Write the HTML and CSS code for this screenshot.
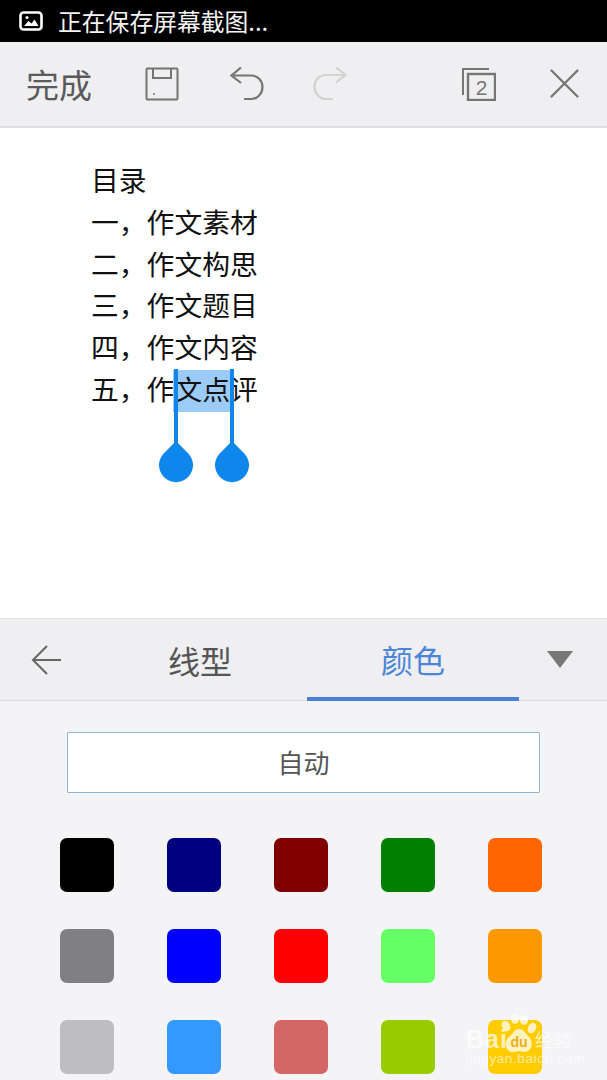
FILE: index.html
```html
<!DOCTYPE html>
<html lang="zh">
<head>
<meta charset="utf-8">
<title>编辑</title>
<link rel="stylesheet" href="styles.css">
</head>
<body>
<div class="screen">
  <header class="status">
    <svg class="status-icon" width="24" height="20" viewBox="0 0 24 20"><rect x="1.500" y="1.500" width="21" height="17" rx="3" fill="none" stroke="#fff" stroke-width="2.600"/><path d="M5 15l4.500-5 3 2.500 3-4 4 6.500z" fill="#fff"/><circle cx="8" cy="6.500" r="1.500" fill="#fff"/></svg>
    <span class="status-text">正在保存屏幕截图...</span>
  </header>

  <nav class="toolbar">
    <span class="done">完成</span>
    <svg class="ico save" width="34" height="34" viewBox="0 0 34 34" fill="none" stroke="#757575" stroke-width="2"><rect x="1.500" y="1.500" width="31" height="31" rx="1"/><path d="M8 2v9h18V2"/><circle cx="9" cy="27" r="1" fill="#757575" stroke="none"/></svg>
    <svg class="ico undo" width="34" height="34" viewBox="0 0 34 34" fill="none" stroke="#757575" stroke-width="2.200"><path d="M11 0.500L1.500 8.500l9.500 7.500M2 8.500h19c6.500 0 11.500 5 11.500 11.500S27.500 32 21 32h-7"/></svg>
    <svg class="ico redo" width="34" height="34" viewBox="0 0 34 34" fill="none" stroke="#d2d2d2" stroke-width="2.200"><path d="M23 0.500l9.500 7.500-9.500 7.500M32 8H13C6.500 8 1.500 13 1.500 19.500S6.500 32 13 32h7"/></svg>
    <svg class="ico copies" width="35" height="34" viewBox="0 0 35 34" fill="none" stroke="#757575" stroke-width="2"><path d="M28 2H2v26"/><rect x="7" y="7" width="27" height="26" stroke-width="2.400"/><text x="20.500" y="27.500" class="copies-num">2</text></svg>
    <svg class="ico close" width="29" height="29" viewBox="0 0 29 29" fill="none" stroke="#757575" stroke-width="2.300" stroke-linecap="round"><path d="M1.500 1.500l26 26M27.500 1.500l-26 26"/></svg>
  </nav>

  <main class="doc">
    <p class="line">目录</p>
    <p class="line">一，作文素材</p>
    <p class="line">二，作文构思</p>
    <p class="line">三，作文题目</p>
    <p class="line">四，作文内容</p>
    <p class="line">五，作<span class="sel">文点</span>评</p>
    <svg class="handle handle-a" width="34" height="114" viewBox="0 0 34 114"><path d="M15 0h4v74l8.800 9A17 17 0 1 1 6.200 83L15 74z" fill="#0f86ec"/></svg>
    <svg class="handle handle-b" width="34" height="114" viewBox="0 0 34 114"><path d="M15 0h4v74l8.800 9A17 17 0 1 1 6.200 83L15 74z" fill="#0f86ec"/></svg>
  </main>

  <section class="panel">
    <div class="tabs">
      <svg class="back" width="30" height="32" viewBox="0 0 30 32" fill="none" stroke="#666" stroke-width="2"><path d="M16 2L2 16l14 14M2 16h28"/></svg>
      <span class="tab">线型</span>
      <span class="tab active">颜色</span>
      <svg class="caret" width="26" height="17" viewBox="0 0 26 17"><path d="M0 0h26L13 17z" fill="#777"/></svg>
    </div>
    <div class="colors">
      <button class="auto">自动</button>
      <div class="swatches">
        <i class="sw c1"></i><i class="sw c2"></i><i class="sw c3"></i><i class="sw c4"></i><i class="sw c5"></i>
        <i class="sw c6"></i><i class="sw c7"></i><i class="sw c8"></i><i class="sw c9"></i><i class="sw c10"></i>
        <i class="sw c11"></i><i class="sw c12"></i><i class="sw c13"></i><i class="sw c14"></i><i class="sw c15"></i>
      </div>
    </div>
  </section>

  <div class="watermark">
    <svg class="paw" width="36" height="42" viewBox="0 0 36 42"><g fill="#fff" fill-opacity=".75"><ellipse cx="5" cy="12" rx="4" ry="5.500" transform="rotate(-25 5 12)"/><ellipse cx="14" cy="5" rx="4" ry="5"/><ellipse cx="23" cy="6" rx="4" ry="5"/><ellipse cx="31" cy="14" rx="4" ry="5.500" transform="rotate(25 31 14)"/><path d="M18 15c5 0 7 5 10 8 5 5 3 15-5 15-2 0-3-1-5-1s-3 1-6 1c-8 0-10-10-4-15 4-3 5-8 10-8z"/></g><text x="18" y="33" class="paw-du">du</text></svg>
    <div class="wm-top"><span class="wm-bai">Bai</span><span class="wm-jy">经验</span></div>
    <div class="wm-url">jingyan.baidu.com</div>
  </div>
</div>
</body>
</html>
```
FILE: styles.css
```css
* { box-sizing: border-box; }
html, body { margin: 0; padding: 0; }
body { background: #fff; font-family: "Noto Sans CJK SC", "Noto Sans", sans-serif; }
.screen { position: relative; width: 607px; height: 1080px; overflow: hidden; }

.status { height: 42px; background: #000; color: #fff; display: flex; align-items: center; padding-left: 19px; }
.status-text { margin-left: 15px; font-size: 23.800px; line-height: 40px; color: #f4f4f4; }

.toolbar { height: 86px; background: #efeef0; border-bottom: 2px solid #dedee0; display: flex; align-items: center; padding-left: 26px; }
.done { font-size: 33px; line-height: 1; color: #5a5a5a; width: 66px; }
.ico { flex: none; display: block; }
.save { margin-left: 53px; margin-top: -1px; }
.undo { margin-left: 51px; margin-top: -1px; }
.redo { margin-left: 49px; margin-top: -1px; }
.copies { margin-left: 114px; margin-top: -1px; }
.close { margin-left: 54px; margin-top: -1px; }
.copies-num { font-family: "Liberation Sans", sans-serif; font-size: 21px; fill: #757575; stroke: none; text-anchor: middle; }

.doc { position: relative; height: 490px; background: #fff; padding: 31px 0 0 91px; }
.line { margin: 0; font-size: 27.800px; line-height: 41.800px; height: 41.800px; color: #111; white-space: nowrap; }
.sel { background: #9ccbf7; display: inline-block; height: 42px; line-height: 37.800px; padding: 0 1px; margin: 0 -1px; }
.handle { position: absolute; top: 241px; display: block; }
.handle-a { left: 159px; }
.handle-b { left: 215px; }

.panel { height: 462px; background: #f4f4f7; }
.tabs { height: 83px; background: #efeef0; border-top: 1px solid #e2e2e4; border-bottom: 1px solid #dcdcde; display: flex; align-items: stretch; position: relative; padding-left: 31px; }
.back { flex: none; align-self: center; margin-right: 34px; }
.tab { flex: none; width: 212px; margin-left: 1px; display: flex; align-items: center; justify-content: center; font-size: 32px; color: #555; height: 82px; }
.tab:first-of-type { margin-left: -1px; }
.tab.active { color: #4a86d8; border-bottom: 4px solid #4a80d8; padding-top: 2px; }
.caret { flex: none; align-self: center; margin-left: 28px; margin-top: -1px; }

.colors { padding: 31px 0 0 60px; }
.auto { display: block; width: 473px; height: 61px; margin-left: 7px; padding: 0 0 2px; background: #fff; border: 1px solid #8fb8d0; border-radius: 1px; font: inherit; font-size: 26px; color: #555; }
.swatches { display: grid; grid-template-columns: repeat(5, 54px); column-gap: 53px; row-gap: 37px; margin-top: 45px; }
.sw { display: block; width: 54px; height: 54px; border-radius: 7px; }
.c1 { background: #000; }
.c2 { background: #000080; }
.c3 { background: #800000; }
.c4 { background: #008000; }
.c5 { background: #ff6600; }
.c6 { background: #807f82; }
.c7 { background: #0000ff; }
.c8 { background: #ff0000; }
.c9 { background: #66ff66; }
.c10 { background: #ff9900; }
.c11 { background: #bebdc0; }
.c12 { background: #3399ff; }
.c13 { background: #d46666; }
.c14 { background: #99cc00; }
.c15 { background: #ffcc00; }

.watermark { position: absolute; left: 466px; top: 1014px; width: 110px; height: 56px; color: #fff; }
.paw { position: absolute; left: 35px; top: 0; }
.paw-du { font-family: "Liberation Sans", sans-serif; font-weight: 700; font-size: 14px; fill: #e8b020; text-anchor: middle; }
.wm-top { position: absolute; left: 0; top: 13px; width: 105px; display: flex; justify-content: space-between; line-height: 24px; opacity: .72; }
.wm-bai { font-family: "Liberation Sans", sans-serif; font-weight: 700; font-size: 25px; letter-spacing: 1px; }
.wm-jy { font-size: 18px; }
.wm-url { position: absolute; left: 0; top: 37px; width: 110px; font-family: "Liberation Sans", sans-serif; font-size: 13.500px; line-height: 16px; letter-spacing: .6px; opacity: .6; white-space: nowrap; }
```
